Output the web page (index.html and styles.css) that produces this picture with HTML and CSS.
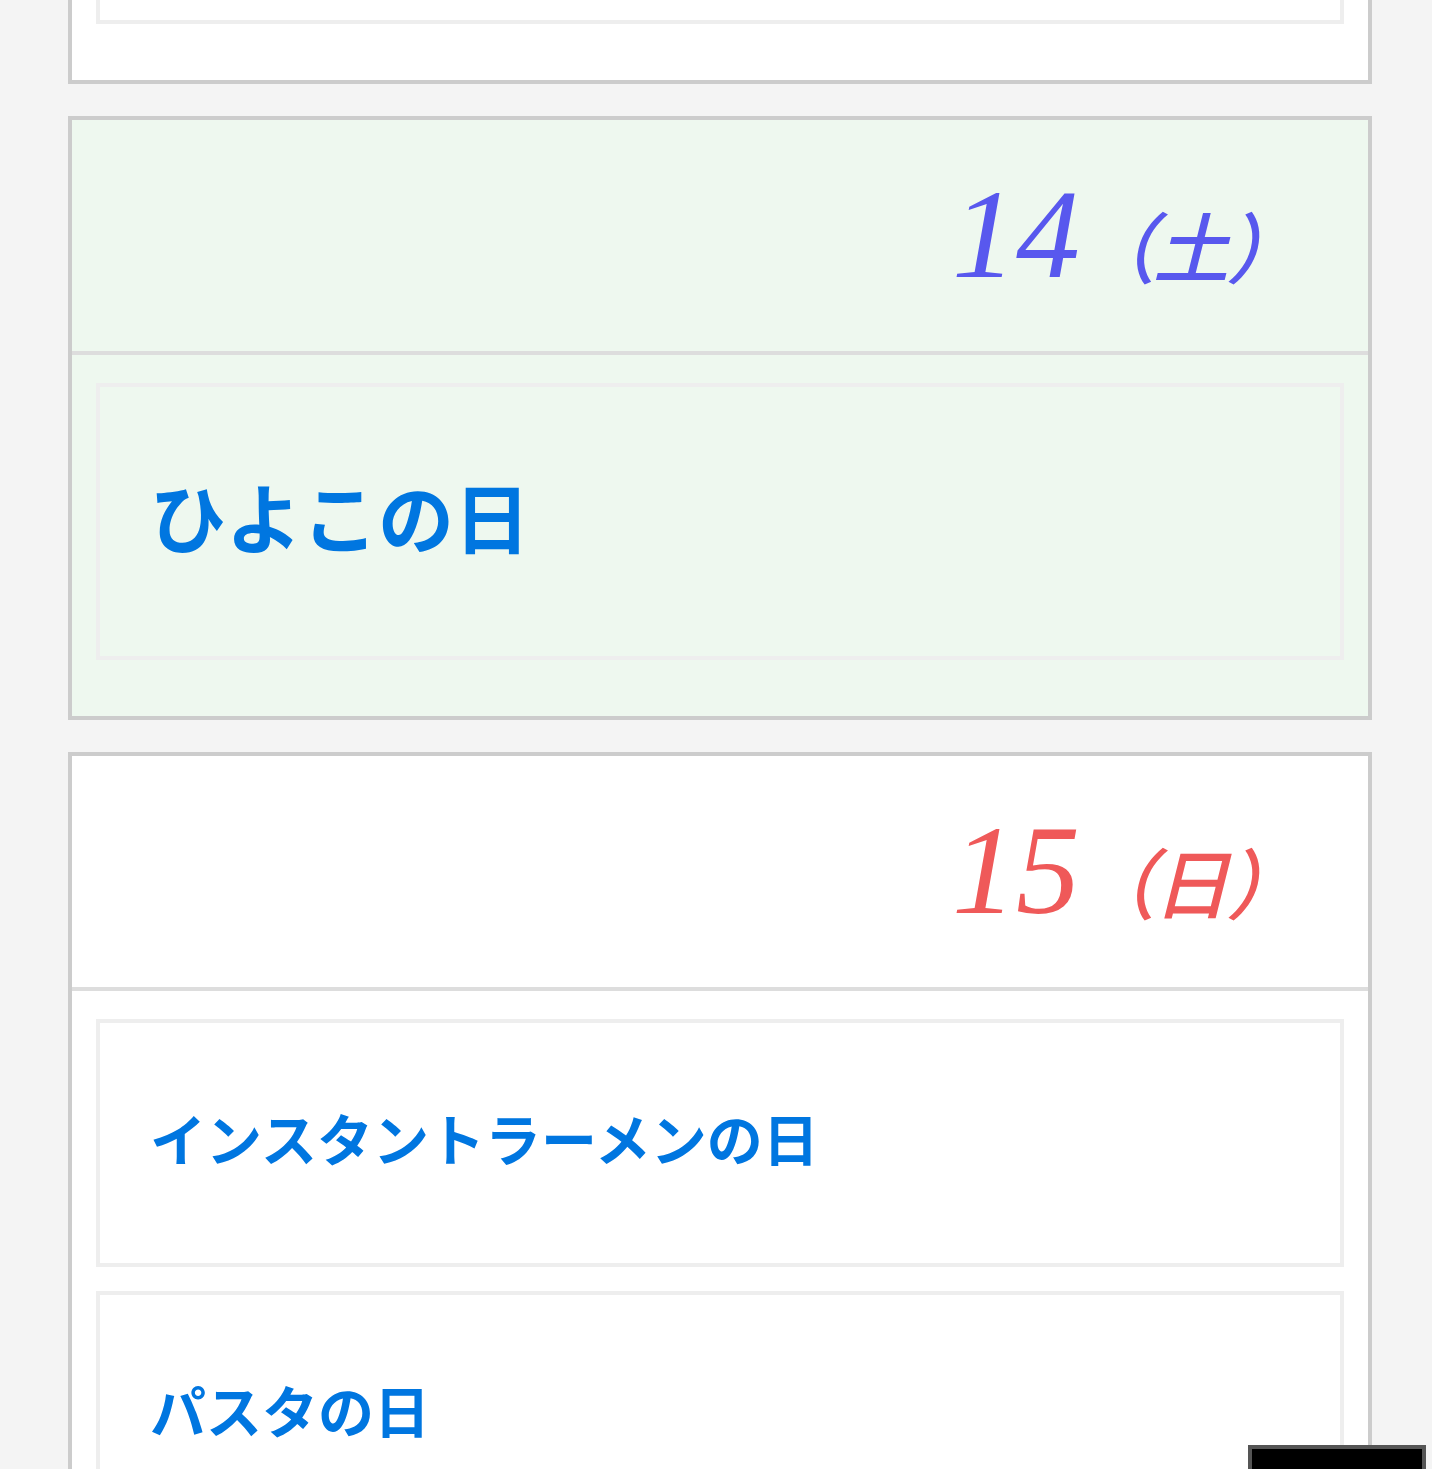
FILE: index.html
```html
<!DOCTYPE html>
<html lang="ja">
<head>
    <meta charset="UTF-8">
    <meta name="viewport" content="width=device-width, initial-scale=1.0">
    <title>今日は何の日カレンダー</title>
    <link rel="stylesheet" href="styles.css">
</head>
<body>
    <div class="day-list">
        <!-- 13日 -->
        <section class="day">
            <div class="day-head">
                <span class="day-num">13</span><span class="day-week">（金）</span>
            </div>
            <div class="day-body">
                <a class="event" href="#">はやり言葉の日</a>
            </div>
        </section>

        <!-- 14日 (today) -->
        <section class="day today">
            <div class="day-head sat">
                <span class="day-num">14</span><span class="day-week">（土）</span>
            </div>
            <div class="day-body">
                <a class="event big" href="#">ひよこの日</a>
            </div>
        </section>

        <!-- 15日 -->
        <section class="day">
            <div class="day-head sun">
                <span class="day-num">15</span><span class="day-week">（日）</span>
            </div>
            <div class="day-body">
                <a class="event" href="#">インスタントラーメンの日</a>
                <a class="event" href="#">パスタの日</a>
            </div>
        </section>
    </div>

    <a class="pagetop" href="#"></a>
</body>
</html>
```

FILE: styles.css
```css
body {
    margin: 0;
    padding: 0;
    background: #f4f4f4;
    font-family: "Noto Sans CJK JP", "Noto Sans", sans-serif;
}

.day-list {
    display: flex;
    flex-direction: column;
    gap: 32px;
    width: 1304px;
    margin: -491px 0 0 68px;
}

.day {
    background: #fff;
    border: 4px solid #ccc;
}

.day.today {
    background: #eef8ef;
}

/* date header */
.day-head {
    box-sizing: border-box;
    height: 235px;
    padding: 50px 101px 0 0;
    border-bottom: 4px solid #ddd;
    text-align: right;
    font-family: "Liberation Serif", serif;
    font-size: 128px;
    line-height: 1;
    color: #333;
}

.day-head.sat {
    color: #5858ee;
}

.day-head.sun {
    color: #ef5959;
}

.day-num {
    font-style: italic;
}

.day-week {
    margin-left: 35px;
    font-family: "Noto Sans CJK JP", sans-serif;
    font-size: 76px;
    font-weight: 500;
    font-style: italic;
    font-feature-settings: "palt";
}

/* events */
.day-body {
    padding: 28px 24px 32px;
}

.event {
    display: block;
    margin-bottom: 24px;
    padding: 72px 50px 84px;
    border: 4px solid #eee;
    color: #0076e0;
    font-size: 56px;
    font-weight: bold;
    line-height: 1.5;
    text-decoration: none;
}

.event.big {
    font-size: 76px;
    line-height: 113px;
}

.pagetop {
    position: fixed;
    right: 6px;
    bottom: -56px;
    width: 170px;
    height: 72px;
    background: #000;
    border: 4px solid #555;
}
```
